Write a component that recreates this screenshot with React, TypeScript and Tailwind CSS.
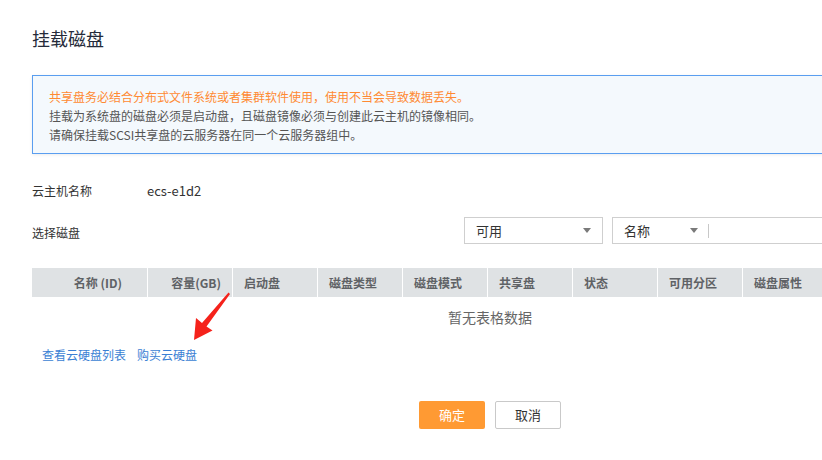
import React from 'react';

const columns = [
  { label: '名称 (ID)', w: 'w-[116px]', align: 'justify-end pr-[25px]' },
  { label: '容量(GB)', w: 'w-[85px]', align: 'justify-end pr-[11px]' },
  { label: '启动盘', w: 'w-[85px]', align: 'pl-[11px]' },
  { label: '磁盘类型', w: 'w-[85px]', align: 'pl-[11px]' },
  { label: '磁盘模式', w: 'w-[85px]', align: 'pl-[11px]' },
  { label: '共享盘', w: 'w-[85px]', align: 'pl-[11px]' },
  { label: '状态', w: 'w-[85px]', align: 'pl-[11px]' },
  { label: '可用分区', w: 'w-[85px]', align: 'pl-[11px]' },
  { label: '磁盘属性', w: 'w-[85px]', align: 'pl-[11px]' },
];

const Caret = () => (
  <svg width="8" height="5" viewBox="0 0 8 5" className="shrink-0">
    <path d="M0 0 H8 L4 5 Z" fill="#7a7a7a" />
  </svg>
);

export default function App() {
  return (
    <div
      className="relative w-[822px] h-[460px] overflow-hidden bg-white pl-[32px] text-[#333]"
      style={{ fontFamily: '"Noto Sans CJK SC", "Noto Sans", sans-serif' }}
    >
      <h1 className="pt-[26px] text-[18px] leading-[24px] text-[#252b3a]">挂载磁盘</h1>

      <div className="mt-[25px] w-[820px] border border-[#5a9ef0] bg-[#f4f9fd] pl-[16px] pt-[11px] pb-[9px] text-[12px] leading-[19px] shadow-[0_1px_3px_rgba(0,0,0,0.08)]">
        <div className="text-[#ff8a33]">共享盘务必结合分布式文件系统或者集群软件使用，使用不当会导致数据丢失。</div>
        <div className="text-[#555]">挂载为系统盘的磁盘必须是启动盘，且磁盘镜像必须与创建此云主机的镜像相同。</div>
        <div className="text-[#555]">请确保挂载SCSI共享盘的云服务器在同一个云服务器组中。</div>
      </div>

      <div className="mt-[27px] flex text-[12px] leading-[20px]">
        <span className="w-[115px] shrink-0">云主机名称</span>
        <span className="text-[13px]">ecs-e1d2</span>
      </div>

      <div className="mt-[16px] flex w-[900px] items-start text-[12px]">
        <span className="mt-[6px] w-[432px] shrink-0 leading-[20px]">选择磁盘</span>
        <div className="flex h-[27px] w-[139px] shrink-0 items-center justify-between border border-[#cfcfcf] px-[11px] text-[13px]">
          <span>可用</span>
          <Caret />
        </div>
        <div className="ml-[9px] flex h-[27px] w-[260px] shrink-0 items-center border border-[#cfcfcf] pl-[11px] text-[13px]">
          <span className="w-[66px]">名称</span>
          <Caret />
          <span className="ml-[10px] h-[14px] w-px bg-[#c8c8c8]" />
        </div>
      </div>

      <div className="mt-[24px] flex h-[29px] w-[900px] bg-[#dfe2e4]">
        {columns.map((c) => (
          <div
            key={c.label}
            className={`${c.w} flex h-full shrink-0 items-center border-r border-white text-[12px] font-bold text-[#5f6266] ${c.align}`}
          >
            {c.label}
          </div>
        ))}
      </div>

      <div className="h-[40px] pt-[10px] pl-[416px] text-[14px] leading-[20px] text-[#666]">暂无表格数据</div>

      <div className="mt-[8px] flex gap-[11px] pl-[10px] text-[12px] leading-[20px] text-[#3b7fd4]">
        <span>查看云硬盘列表</span>
        <span>购买云硬盘</span>
      </div>

      <div className="mt-[36px] flex gap-[10px] pl-[387px] text-[13px]">
        <button className="h-[28px] w-[66px] rounded-[2px] bg-[#ff9a33] text-white">确定</button>
        <button className="h-[28px] w-[66px] rounded-[2px] border border-[#c9c9c9] bg-white text-[#333]">取消</button>
      </div>

      <svg className="absolute left-[186px] top-[288px]" width="50" height="58" viewBox="186 288 50 58">
        <path
          d="M228.5 292.5 L230 294 L206.5 326.5 L212.5 330.5 L194 340 L196 318 L202 323 Z"
          fill="#f5221b"
        />
      </svg>
    </div>
  );
}
